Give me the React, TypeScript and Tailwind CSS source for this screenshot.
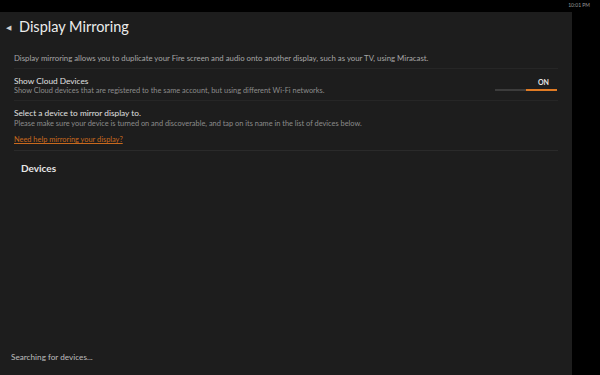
export default function App() {
  return (
    <div className="flex h-[375px] w-[600px] flex-col bg-black font-['Lato',sans-serif] overflow-hidden">
      <div className="flex h-[12px] shrink-0 items-center justify-end pr-[10px]">
        <span className="text-[5px] text-[#9a9a9a]">10:01 PM</span>
      </div>
      <div className="flex flex-1 min-h-0">
        <div className="flex w-[572px] flex-col bg-[#1d1d1d]">
          <div className="flex items-center gap-[8px] pl-[6px] pt-[3px] h-[27px]">
            <span className="text-[7px] text-[#cfcfcf]">◀</span>
            <h1 className="text-[14.5px] leading-none text-[#ececec]">Display Mirroring</h1>
          </div>
          <div className="px-[14px] pt-[14px]">
            <p className="text-[7.8px] leading-[10px] text-[#a6a6a6]">
              Display mirroring allows you to duplicate your Fire screen and audio onto another display, such as your TV, using Miracast.
            </p>
            <div className="mt-[5px] h-px bg-[#262626]" />
            <div className="flex items-end justify-between pt-[7px] pb-[5px] border-b border-[#262626]">
              <div>
                <p className="text-[8.3px] leading-[10px] text-[#e0e0e0]">Show Cloud Devices</p>
                <p className="text-[7.4px] leading-[9px] text-[#8c8c8c]">
                  Show Cloud devices that are registered to the same account, but using different Wi-Fi networks.
                </p>
              </div>
              <div className="flex w-[62px] flex-col items-end mr-[1px] mb-[4px]">
                <span className="mr-[8px] text-[7px] font-bold text-[#e6e6e6]">ON</span>
                <div className="mt-[2px] flex h-[2px] w-full">
                  <div className="w-1/2 bg-[#3c3c3c]" />
                  <div className="w-1/2 bg-[#e07b24]" />
                </div>
              </div>
            </div>
            <div className="pt-[7px] pb-[6px] border-b border-[#2a2a2a]">
              <p className="text-[8.3px] leading-[11px] text-[#e0e0e0]">
                <span>Select a device to mirror display to.</span>
              </p>
              <p className="text-[7.4px] leading-[9px] text-[#8c8c8c]">
                Please make sure your device is turned on and discoverable, and tap on its name in the list of devices below.
              </p>
              <a className="mt-[7px] block text-[7.4px] leading-[9px] text-[#c8691d] underline">Need help mirroring your display?</a>
            </div>
            <p className="pl-[7px] pt-[10px] text-[10px] font-bold text-[#e6e6e6]">Devices</p>
          </div>
          <div className="flex-1" />
          <p className="pl-[11px] pb-[12px] text-[8.2px] text-[#bdbdbd]">Searching for devices...</p>
        </div>
      </div>
    </div>
  );
}
